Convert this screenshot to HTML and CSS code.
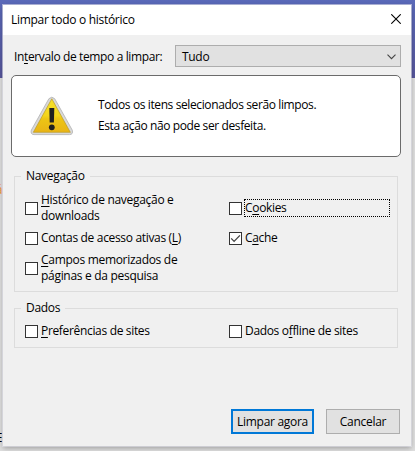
FILE: index.html
```
<!DOCTYPE html>
<html lang="pt-BR">
<head>
    <meta charset="UTF-8">
    <title>Limpar todo o histórico</title>
    <link rel="stylesheet" href="styles.css">
</head>
<body>
    <div class="backdrop">
        <!-- Página por trás da janela -->
        <span class="behind behind-link">á</span>
        <span class="behind behind-text">E</span>

        <div class="dialog">
            <div class="titlebar">
                <span class="title">Limpar todo o histórico</span>
                <svg class="close" width="10" height="10" viewBox="0 0 10 10">
                    <path d="M0.3 0.3L9.7 9.7M9.7 0.3L0.3 9.7" stroke="#000" stroke-width="1.1" fill="none"/>
                </svg>
            </div>

            <div class="content">
                <div class="range">
                    <span class="range-label">In<u>t</u>ervalo de tempo a limpar:</span>
                    <div class="select">
                        <span>Tudo</span>
                        <svg width="9" height="6" viewBox="0 0 9 6">
                            <path d="M0.5 0.7L4.5 4.7L8.5 0.7" stroke="#444" stroke-width="1.1" fill="none"/>
                        </svg>
                    </div>
                </div>

                <div class="warning">
                    <svg class="warning-icon" width="44" height="40" viewBox="0 0 44 40">
                        <defs>
                            <linearGradient id="yellow" x1="0" y1="0" x2="0" y2="1">
                                <stop offset="0" stop-color="#f5e12c"/>
                                <stop offset="0.5" stop-color="#f4d51c"/>
                                <stop offset="0.6" stop-color="#edc514"/>
                                <stop offset="1" stop-color="#e9b416"/>
                            </linearGradient>
                        </defs>
                        <path d="M18.9 2.7Q21.8 -0.3 24.7 2.7L42.3 34.2Q43.4 38.4 39.6 38.6H4Q0.2 38.4 1.3 34.2Z" fill="#d9d9d9" stroke="#b0b0b0" stroke-width="0.8"/>
                        <path d="M21.8 2.8L40.3 36.3H3.3Z" fill="url(#yellow)" stroke="#b99b2a" stroke-width="0.7" stroke-linejoin="round"/>
                        <path d="M19.3 12H24.3L23.9 26.4H19.7Z" fill="#202020"/>
                        <circle cx="21.8" cy="31.3" r="2.9" fill="#202020"/>
                    </svg>
                    <div class="warning-text">
                        <div class="warning-first">Todos os itens selecionados serão limpos.</div>
                        <div class="warning-second">Esta ação não pode ser desfeita.</div>
                    </div>
                </div>

                <fieldset class="group history">
                    <legend>Navegação</legend>
                    <div class="row">
                        <label class="item">
                            <span class="box"></span>
                            <span class="text long"><u>H</u>istórico de navegação e<br>downloads</span>
                        </label>
                        <label class="item">
                            <span class="box"></span>
                            <span class="text focused">C<u>o</u>okies</span>
                        </label>
                    </div>
                    <div class="row">
                        <label class="item">
                            <span class="box"></span>
                            <span class="text">Contas de acesso ativas (<u>L</u>)</span>
                        </label>
                        <label class="item">
                            <span class="box">
                                <svg width="11" height="11" viewBox="0 0 11 11">
                                    <path d="M1.2 5.4L4.1 8.4L9.9 2.4" stroke="#444" stroke-width="1.3" fill="none"/>
                                </svg>
                            </span>
                            <span class="text">C<u>a</u>che</span>
                        </label>
                    </div>
                    <div class="row">
                        <label class="item">
                            <span class="box"></span>
                            <span class="text long"><u>C</u>ampos memorizados de<br>páginas e da pesquisa</span>
                        </label>
                    </div>
                </fieldset>

                <fieldset class="group data">
                    <legend>Dados</legend>
                    <div class="row">
                        <label class="item">
                            <span class="box"></span>
                            <span class="text"><u>P</u>referências de sites</span>
                        </label>
                        <label class="item">
                            <span class="box"></span>
                            <span class="text">Dados o<u>f</u>fline de sites</span>
                        </label>
                    </div>
                </fieldset>

                <div class="buttons">
                    <button class="button primary">Limpar agora</button>
                    <button class="button cancel">Cancelar</button>
                </div>
            </div>
        </div>
    </div>
</body>
</html>
```

FILE: styles.css
```
* {
    box-sizing: border-box;
}
body {
    margin: 0;
    background: #fff;
    font-family: "Open Sans", "Noto Sans", sans-serif;
    font-size: 12px;
    line-height: 16px;
    letter-spacing: -0.3px;
    color: #000;
}
u {
    text-decoration: underline;
    text-decoration-thickness: 1px;
    text-underline-offset: 2px;
    text-decoration-skip-ink: none;
}
.backdrop {
    position: relative;
    width: 415px;
    height: 451px;
    padding: 5px 4px 5px 3px;
    overflow: hidden;
    background: linear-gradient(#5a69b9, #56559a) 0 0 / 100% 78px no-repeat, #dedede;
}
.behind {
    position: absolute;
    left: 0;
    width: 2px;
    overflow: hidden;
    direction: rtl;
}
.behind-link {
    top: 182px;
    color: #e08a3c;
}
.behind-text {
    top: 430px;
}
.dialog {
    height: 441px;
    background: #f0f0f0;
    box-shadow: 0 0 0 1px rgba(225, 225, 235, 0.6), 0 2px 5px rgba(0, 0, 0, 0.3);
}
.titlebar {
    display: flex;
    align-items: center;
    justify-content: space-between;
    height: 30px;
    padding: 0 10px 0 8px;
    background: #fff;
}
.close {
    margin-bottom: 2px;
}
.content {
    padding: 10px 10px 0 8px;
}
.range {
    display: flex;
    align-items: center;
    justify-content: space-between;
    height: 22px;
    padding-left: 3px;
}
.range-label {
    padding-top: 2px;
    letter-spacing: -0.37px;
}
.select {
    display: flex;
    align-items: center;
    justify-content: space-between;
    width: 226px;
    height: 22px;
    padding: 1px 4px 0 6px;
    border: 1px solid #adadad;
    background: #e1e1e1;
}
.warning {
    display: flex;
    align-items: center;
    height: 82px;
    margin-top: 8px;
    padding-left: 18px;
    border: 1px solid #6b6b6b;
    border-radius: 5px;
    background: #fff;
}
.warning-text {
    margin: -2px 0 0 24px;
    line-height: 21px;
    letter-spacing: -0.39px;
}
.group {
    margin: 0 3px;
    padding: 0 7px 0 10px;
    border: 1px solid #dcdcdc;
}
.group legend {
    height: 16px;
    margin-left: -4px;
    padding: 0 5px;
}
.history {
    height: 124px;
    margin-top: 11px;
}
.data {
    height: 48px;
    margin-top: 8px;
}
.row {
    display: grid;
    grid-template-columns: 204px 1fr;
    grid-template-rows: 30px;
}
.history .row:nth-of-type(1) {
    margin-top: 9px;
}
.item {
    display: flex;
    align-items: center;
    gap: 2px;
}
.box {
    flex: none;
    width: 13px;
    height: 13px;
    border: 1px solid #333;
    background: #fff;
}
.box svg {
    display: block;
}
.text {
    flex: 1;
    height: 18px;
    border: 1px solid transparent;
    letter-spacing: -0.33px;
    white-space: nowrap;
}
.long {
    height: 34px;
    letter-spacing: -0.3px;
}
.focused {
    border: 1px dotted #000;
}
.buttons {
    display: flex;
    justify-content: flex-end;
    gap: 12px;
    margin-top: 61px;
    padding-right: 1px;
}
.button {
    height: 25px;
    padding: 0;
    border: 1px solid #adadad;
    background: #e1e1e1;
    font: inherit;
    letter-spacing: inherit;
}
.primary {
    width: 83px;
    border: 2px solid #0078d7;
}
.cancel {
    width: 74px;
}
```
